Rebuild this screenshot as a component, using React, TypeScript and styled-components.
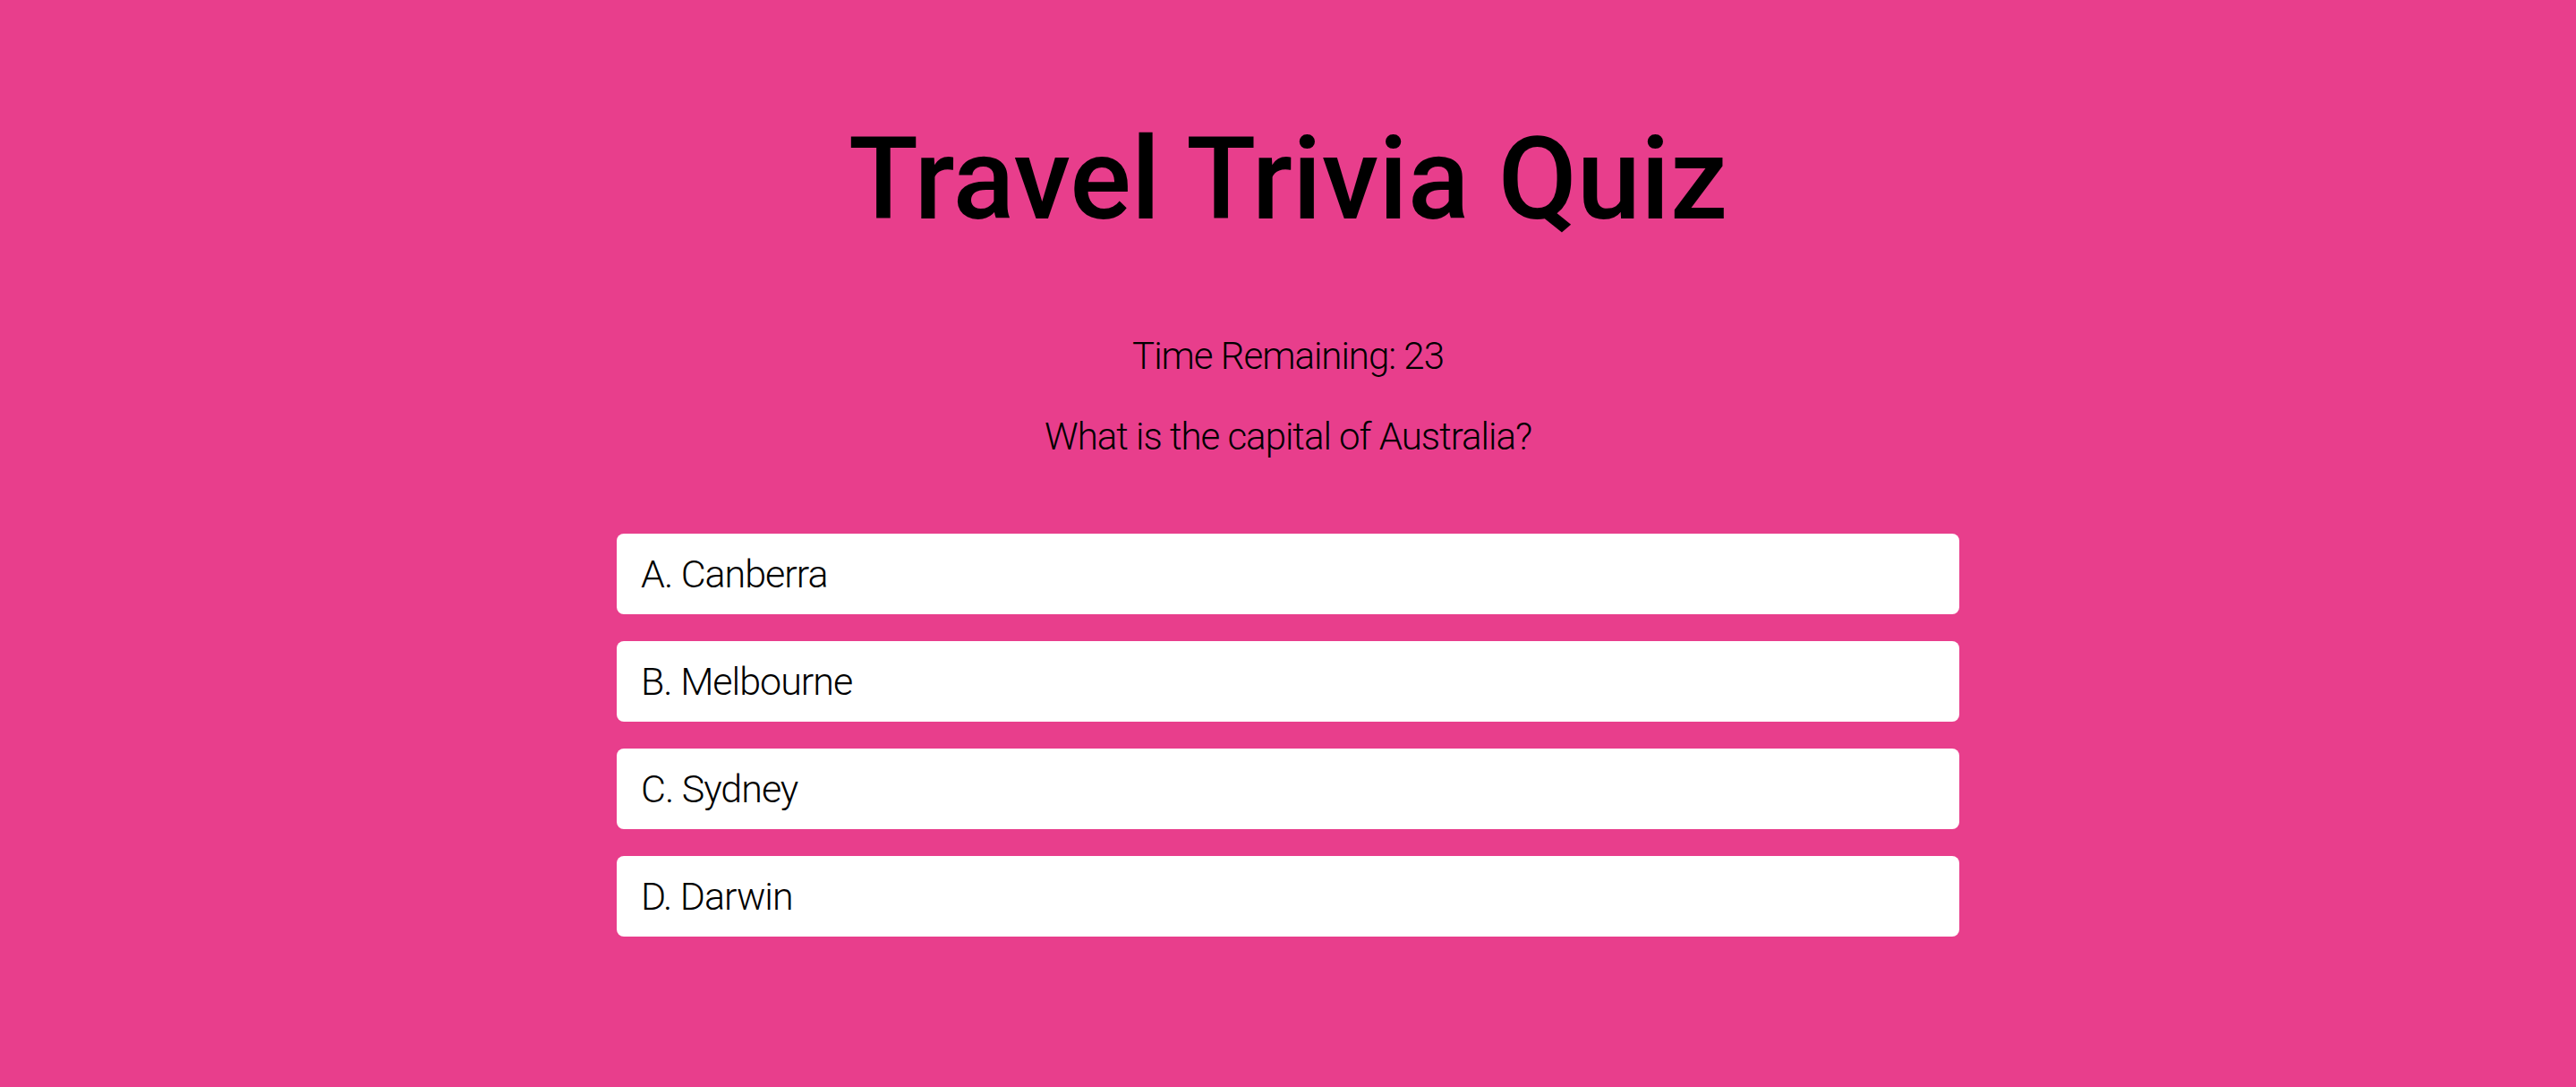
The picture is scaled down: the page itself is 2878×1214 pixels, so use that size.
import styled, { createGlobalStyle } from 'styled-components';

const GlobalStyle = createGlobalStyle`
  html, body {
    margin: 0;
    padding: 0;
    background-color: #e83e8c;
  }
  * {
    box-sizing: border-box;
  }
`;

const Page = styled.div`
  min-height: 100vh;
  background-color: #e83e8c;
  display: flex;
  flex-direction: column;
  align-items: center;
  padding-top: 125px;
  font-family: Roboto, 'Liberation Sans', sans-serif;
  color: #000;
`;

const Title = styled.h1`
  margin: 0;
  font-size: 128px;
  line-height: 150px;
  font-weight: 500;
`;

const Info = styled.p<{ $gap: number }>`
  margin: ${(p) => p.$gap}px 0 0;
  font-size: 42px;
  line-height: 50px;
  font-weight: 300;
  letter-spacing: -1px;
`;

const Options = styled.ul`
  list-style: none;
  margin: 83px 0 0;
  padding: 0;
  width: 1500px;
  display: flex;
  flex-direction: column;
  gap: 30px;
`;

const Option = styled.li`
  height: 90px;
  display: flex;
  align-items: center;
  padding: 0 27px;
  background-color: #fff;
  border-radius: 8px;
  font-size: 43px;
  font-weight: 300;
  letter-spacing: -1px;
  cursor: pointer;
`;

const options = ['A. Canberra', 'B. Melbourne', 'C. Sydney', 'D. Darwin'];

const App = () => {
  const timeLeft = 23;
  return (
    <>
      <GlobalStyle />
      <Page>
        <Title>Travel Trivia Quiz</Title>
        <Info $gap={98}>Time Remaining: {timeLeft}</Info>
        <Info $gap={40}>What is the capital of Australia?</Info>
        <Options>
          {options.map((o) => (
            <Option key={o}>{o}</Option>
          ))}
        </Options>
      </Page>
    </>
  );
};

export default App;
